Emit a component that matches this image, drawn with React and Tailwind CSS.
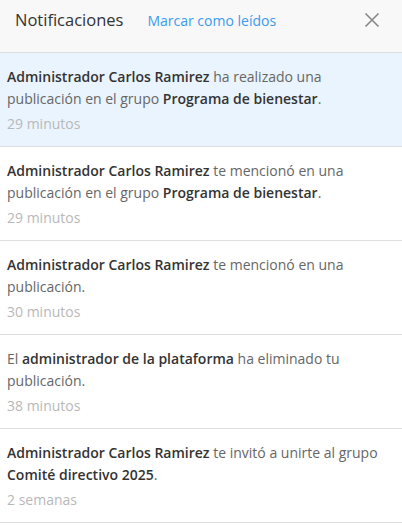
import React from "react";

const items = [
  {
    unread: true,
    parts: [["b", "Administrador Carlos Ramirez"], ["n", " ha realizado una publicación en el grupo "], ["b", "Programa de bienestar"], ["n", "."]],
    time: "29 minutos",
  },
  {
    parts: [["b", "Administrador Carlos Ramirez"], ["n", " te mencionó en una publicación en el grupo "], ["b", "Programa de bienestar"], ["n", "."]],
    time: "29 minutos",
  },
  {
    parts: [["b", "Administrador Carlos Ramirez"], ["n", " te mencionó en una publicación."]],
    time: "30 minutos",
  },
  {
    parts: [["n", "El "], ["b", "administrador de la plataforma"], ["n", " ha eliminado tu publicación."]],
    time: "38 minutos",
  },
  {
    parts: [["b", "Administrador Carlos Ramirez"], ["n", " te invitó a unirte al grupo "], ["b", "Comité directivo 2025"], ["n", "."]],
    time: "2 semanas",
  },
];

export default function App() {
  return (
    <div className="w-[402px] h-[526px] bg-white overflow-hidden" style={{ fontFamily: '"Open Sans", "Noto Sans", sans-serif' }}>
      <div className="h-[53px] bg-[#f8f8f8] border-b border-[#dedede] flex items-center pl-[15px] pr-[22px] pb-[12px]">
        <span className="text-[16.5px] text-[#333]">Notificaciones</span>
        <span className="ml-[24px] text-[14px] text-[#3a9bef]">Marcar como leídos</span>
        <button className="ml-auto text-[#888]">
          <svg width="16" height="16" viewBox="0 0 16 16" fill="none" stroke="currentColor" strokeWidth="1.6">
            <path d="M1.5 1.5L14.5 14.5M14.5 1.5L1.5 14.5" />
          </svg>
        </button>
      </div>
      {items.map((it, i) => (
        <div key={i} className={`h-[94px] border-b border-[#dedede] pl-[7px] pr-[10px] pt-[13px] ${it.unread ? "bg-[#eaf4fe]" : "bg-white"}`}>
          <p className="text-[14px] leading-[22px] text-[#666]">
            {it.parts.map(([t, s], j) =>
              t === "b" ? (
                <span key={j} className="font-semibold text-[#333]">{s}</span>
              ) : (
                <span key={j}>{s}</span>
              )
            )}
          </p>
          <p className="mt-[3px] text-[14px] leading-[22px] text-[#b8b8b8]">{it.time}</p>
        </div>
      ))}
    </div>
  );
}
